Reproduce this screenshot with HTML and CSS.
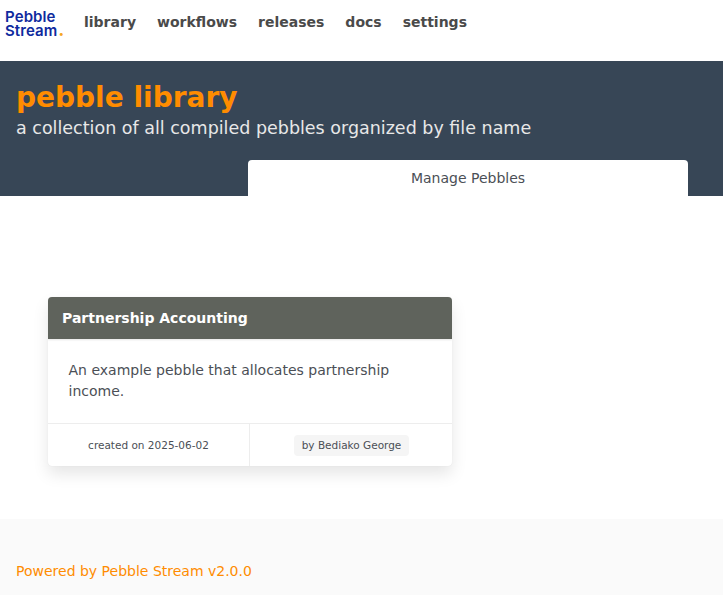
FILE: index.html
```html
<!DOCTYPE html>
<html lang="en">
<head>
<meta charset="utf-8">
<title>pebble library</title>
<link rel="stylesheet" href="styles.css">
</head>
<body>
<nav class="navbar">
  <a class="logo" href="#"><span>Pebble</span><span>Stream<i class="dot">.</i></span></a>
  <div class="nav-links">
    <a href="#">library</a>
    <a href="#">workflows</a>
    <a href="#">releases</a>
    <a href="#">docs</a>
    <a href="#">settings</a>
  </div>
</nav>
<header class="hero">
  <h1 class="hero-title">pebble library</h1>
  <p class="hero-subtitle">a collection of all compiled pebbles organized by file name</p>
  <div class="tabs">
    <a class="tab" href="#">Manage Pebbles</a>
  </div>
</header>
<main class="content">
  <article class="card">
    <h2 class="card-title">Partnership Accounting</h2>
    <p class="card-body">An example pebble that allocates partnership income.</p>
    <div class="card-foot">
      <div class="foot-item foot-date">created on 2025-06-02</div>
      <div class="foot-item foot-author"><span class="tag">by Bediako George</span></div>
    </div>
  </article>
</main>
<footer class="footer">
  <a href="#">Powered by Pebble Stream v2.0.0</a>
</footer>
</body>
</html>
```
FILE: styles.css
```css
* { box-sizing: border-box; }
html, body { margin: 0; padding: 0; }
body {
  font-family: "DejaVu Sans", sans-serif;
  font-size: 14px;
  color: #4b4f56;
  background: #fff;
  height: 595px;
  overflow: hidden;
  display: flex;
  flex-direction: column;
}
a { text-decoration: none; color: inherit; }

.navbar {
  height: 61px;
  display: flex;
  align-items: flex-start;
  padding: 10px 0 0 5px;
}
.logo {
  display: flex;
  flex-direction: column;
  width: 59px;
  font-family: Inter, sans-serif;
  font-weight: 600;
  font-size: 15px;
  line-height: 14px;
  letter-spacing: 0.1px;
  color: #0f2a9e;
}
.dot { font-style: normal; font-weight: 900; color: #f5a623; margin-left: 1px; }
.nav-links {
  display: flex;
  gap: 21px;
  margin-left: 20px;
  padding-top: 3px;
  font-weight: 700;
  font-size: 14px;
  line-height: 18px;
  color: #4a4a4a;
}

.hero {
  height: 135px;
  background: #374656;
  padding: 20px 16px 0;
  display: flex;
  flex-direction: column;
}
.hero-title {
  margin: 0;
  font-size: 28px;
  line-height: 33px;
  font-weight: 700;
  color: #ff8c00;
}
.hero-subtitle {
  margin: 0;
  font-size: 17.5px;
  line-height: 28px;
  color: #e8e8e8;
}
.tabs {
  margin-top: auto;
  display: flex;
  justify-content: flex-end;
  padding-right: 19px;
}
.tab {
  width: 440px;
  height: 36px;
  background: #fff;
  border-radius: 4px 4px 0 0;
  text-align: center;
  font-size: 14px;
  line-height: 36px;
}

.content {
  flex: 1;
  padding: 101px 48px 0;
}
.card {
  width: 404px;
  background: #fff;
  border-radius: 4px;
  overflow: hidden;
  box-shadow: 0 8px 16px rgba(10, 10, 10, 0.1), 0 0 1px rgba(10, 10, 10, 0.1);
}
.card-title {
  position: relative;
  margin: 0;
  height: 42px;
  padding: 0 14px;
  background: #5f635c;
  color: #fff;
  font-size: 14px;
  line-height: 42px;
  font-weight: 700;
  box-shadow: 0 1px 2px rgba(10, 10, 10, 0.1);
}
.card-body {
  margin: 0;
  height: 84px;
  padding: 21px 20.5px 0;
  font-size: 14px;
  line-height: 21px;
}
.card-foot {
  display: flex;
  height: 43px;
  border-top: 1px solid #ededed;
}
.foot-item {
  display: flex;
  align-items: center;
  justify-content: center;
  font-size: 10.5px;
}
.foot-date { width: 201px; }
.foot-author { flex: 1; border-left: 1px solid #ededed; padding-left: 1px; }
.tag {
  height: 21px;
  padding: 0 8px;
  background: #f5f5f5;
  border-radius: 4px;
  line-height: 21px;
}

.footer {
  height: 76px;
  background: #fafafa;
  padding: 43px 16px 0;
  font-size: 14px;
  line-height: 18px;
  color: #ff8c00;
}
```
